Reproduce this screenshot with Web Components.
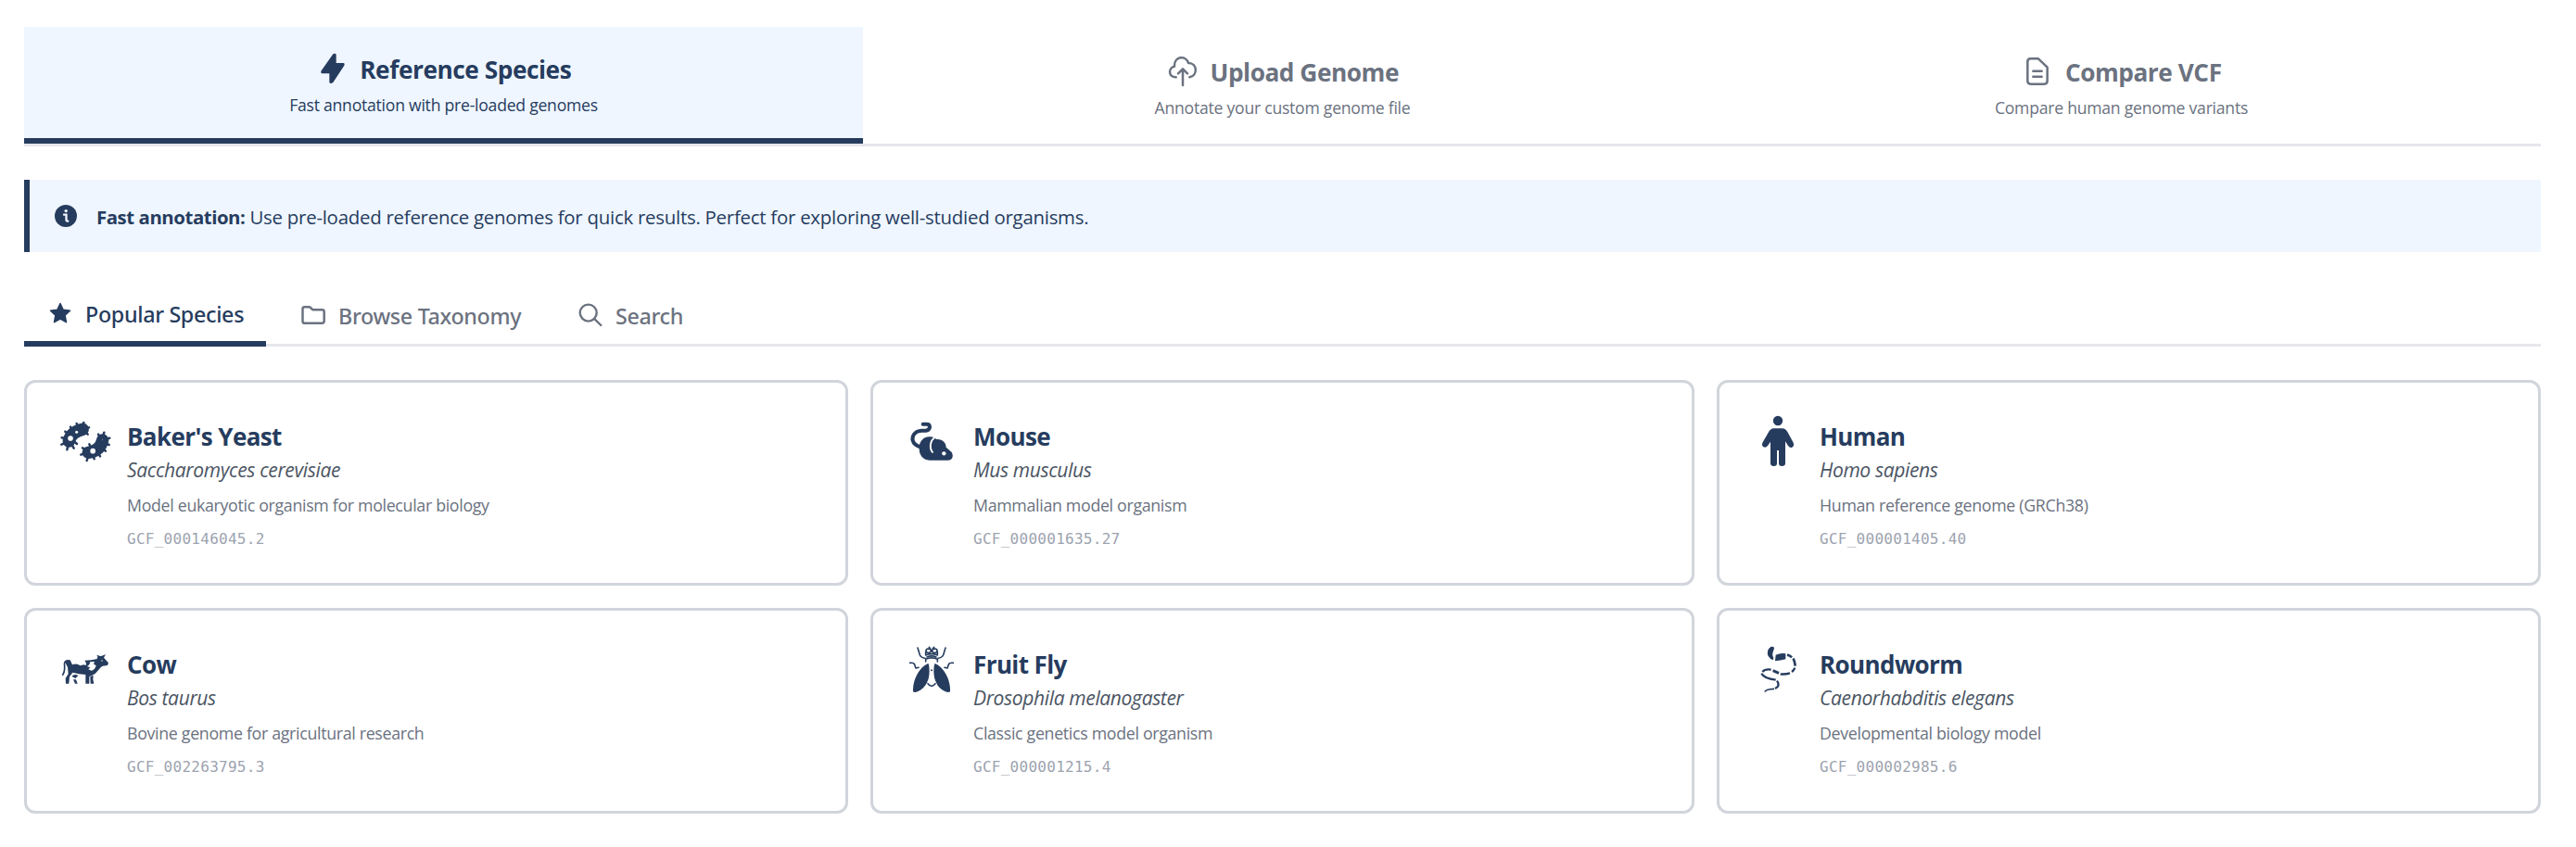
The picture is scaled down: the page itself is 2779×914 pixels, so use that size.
<!DOCTYPE html>
<html lang="en">
<head>
<meta charset="utf-8">
<title>Genome annotation</title>
<style>
body{margin:0;background:#fff;font-family:"Open Sans","Noto Sans",sans-serif;color:#263c5e}
</style>
</head>
<body>
<genome-app></genome-app>
<script>
const ICONS={
bolt:['132 57 90 90','<path d="M178 55Q187 51 188 58V84H211Q217 85 214 92L178 147Q168 154 166 146V118H143Q136 117 140 109Z" fill="currentColor"/>'],
upload:['120 65 90 90','<g fill="none" stroke="currentColor" stroke-width="7.5" stroke-linecap="round" stroke-linejoin="round"><path d="M143 129C118 130 117 98 138 94C136 61 175 56 183 83C213 83 214 124 187 129"/><path d="M165 155V103M150 117L165 102L180 117"/></g>'],
doc:['159 66 90 90','<path d="M182 70H207L236 98V142Q236 152 226 152H182Q172 152 172 142V80Q172 70 182 70ZM190 110.500H218M190 128H218" fill="none" stroke="currentColor" stroke-width="7.500" stroke-linecap="round" stroke-linejoin="round"/>'],
info:['0 0 24 24','<circle cx="12" cy="12" r="12" fill="currentColor"/><circle cx="12.200" cy="6.600" r="1.700" fill="#eff6ff"/><path d="M10 10.700H12.500V16.200Q12.500 18 14.300 17.600" fill="none" stroke="#eff6ff" stroke-width="2.300" stroke-linecap="round"/>'],
star:['0 0 30 30','<path d="M15 4.500L18.200 11.300L25.500 12.200L20.100 17.300L21.500 24.700L15 21.100L8.500 24.700L9.900 17.300L4.500 12.200L11.800 11.300Z" fill="currentColor" stroke="currentColor" stroke-width="1.500" stroke-linejoin="round"/>'],
folder:['0 0 30 30','<path d="M3.500 8.300Q3.500 6.300 5.700 6.300H10.500Q11.300 6.300 12 7L14.300 9.200H24.500Q26.700 9.200 26.700 11.400V21.600Q26.700 23.800 24.500 23.800H5.700Q3.500 23.800 3.500 21.600Z" fill="none" stroke="currentColor" stroke-width="2.500" stroke-linejoin="round"/>'],
search:['0 0 30 30','<g fill="none" stroke="currentColor" stroke-width="2.400" stroke-linecap="round"><circle cx="12.700" cy="12.600" r="9"/><path d="M19.300 19.200L26.300 26"/></g>'],
yeast:['45 27 162 162','<g fill="none" stroke="currentColor" stroke-linecap="round"><path d="M73 108Q80 78 117 70" stroke-width="41"/><path d="M136 145Q174 140 182 105" stroke-width="40"/><path stroke-width="7.500" d="M121 48L115 66M98 51L104 66M78 62L88 76M61 77L76 88M50 97L70 101M49 119L68 112M67 136L73 110M89 131L78 112M99 117L85 105M138 64L122 70M134 86L120 74M187 80L182 100M168 86L178 100M205 98L186 105M203 120L182 112M192 140L174 128M174 157L164 140M155 166L151 148M131 171L138 148M112 152L134 144M117 130L134 140M139 118L148 134"/></g><circle cx="78" cy="99" r="8.500" fill="#fff"/><circle cx="98" cy="79" r="4.500" fill="#fff"/><circle cx="150.500" cy="140" r="8.500" fill="#fff"/><circle cx="182" cy="104" r="1.300" fill="#fff"/>'],
mouse:['144 147 162 162','<path d="M197 173H209Q219 173 219 183Q218 193 206 194H192C170 195 161 212 164 226Q168 241 188 247" fill="none" stroke="currentColor" stroke-width="12" stroke-linecap="round"/><path d="M185 253C183 228 202 212 220 214Q235 215 240 222C260 220 272 233 272 248L290 264Q296 275 291 284Q287 290 278 290H218C199 290 185 275 185 253Z" fill="currentColor"/><path d="M234 217C220 228 217 250 228 264" fill="none" stroke="#fff" stroke-width="5.500" stroke-linecap="round"/><circle cx="265" cy="268" r="6.500" fill="#fff"/>'],
human:['123 147 162 162','<g fill="currentColor"><circle cx="204" cy="162" r="15.500"/><path d="M190 187H218Q229 188 235 198L254 233Q258 243 250 248Q243 251 237 243L228 229V300Q228 309 217 309Q207 309 207 300V258H201V300Q201 309 191 309Q180 309 180 300V230L171 243Q165 251 157 247Q150 242 155 232L174 199Q180 188 190 187Z"/></g>'],
cow:['135 135 162 162','<g fill="currentColor"><path d="M149 191Q157 183 167 187L174 202Q188 196 200 205L210 202Q222 207 218 195L214 188L236 187L254 183L256 176L253 170L264 174L270 173L282 168L276 179L291 196L288 204L272 206Q266 209 256 222Q248 234 238 236L229 240L229 263H217L217 234Q195 232 175 227L165 241L163 263H153L152 246L161 232L159 210Z"/><path d="M172 239Q182 230 193 237L184 246ZM177 250L186 250L191 263H183ZM232 240L242 236L241 250L244 263H233Z"/></g><path d="M158 189Q146 190 149 206Q150 226 142 236" fill="none" stroke="currentColor" stroke-width="5"/><path d="M222 207Q232 202 231 193L246 192L243 200L251 204Q248 218 236 221L226 217L232 211Z" fill="#fff"/><circle cx="270" cy="189" r="2" fill="#fff"/>'],
fly:['144 135 162 162','<g fill="currentColor"><path d="M215 198C190 206 163 246 165 289Q170 293 180 289C207 278 222 248 217 208Z"/><path d="M235 198C260 206 287 246 285 289Q280 293 270 289C243 278 228 248 233 208Z"/><circle cx="225" cy="220" r="3"/></g><g fill="none" stroke="currentColor" stroke-width="4.800" stroke-linecap="round" stroke-linejoin="round"><path d="M180 147L187 170Q190 178 204 181M270 147L263 170Q260 178 246 181M155 196Q169 195 170 202L174 213L183 211M295 196Q281 195 280 202L276 213L267 211"/><ellipse cx="215" cy="157" rx="8" ry="6.500"/><ellipse cx="235" cy="157" rx="8" ry="6.500"/><path d="M217 145L221 150M233 145L229 150M206 160V171Q225 163 244 171V160M206 192V184Q225 175 244 184V192M210 177Q225 170 240 177M213 263Q225 279 237 263"/></g>'],
worm:['123 135 162 162','<g fill="currentColor"><path d="M190 144Q178 140 171 157Q167 178 188 187L190 180Q183 168 191 153Q193 147 190 144Z"/><path d="M197 170Q214 163 229 166V184Q212 188 195 190Z"/></g><g fill="none" stroke="currentColor" stroke-width="7"><path d="M234 170Q243 172 249 178M253 182Q258 188 260 206" stroke-width="8"/><path d="M259 212Q256 220 249 225M243 229Q228 234 212 232"/><path d="M207 229L188 221" stroke-width="9"/><path d="M182 218Q162 215 154 225M151 230Q159 246 197 251M201 254Q213 270 195 279"/><path d="M192 280Q164 281 162 290" stroke-width="5.500"/></g>']
};
const define=(name,render)=>customElements.define(name,class extends HTMLElement{
  connectedCallback(){if(!this.shadowRoot)this.attachShadow({mode:'open'}).innerHTML=render(this)}
});
define('ui-icon',el=>{const [box,art]=ICONS[el.getAttribute('name')];return `<style>:host{display:block;flex:none;width:30px;height:30px}svg{display:block;width:100%;height:100%;overflow:visible}</style><svg viewBox="${box}" aria-hidden="true">${art}</svg>`});
define('mode-tab',el=>`<style>
:host{display:flex;flex-direction:column;align-items:center;box-sizing:border-box;height:126px;padding-top:29px;color:#6b7280}
:host([active]){padding-top:26px;background:#eff6ff;color:#263c5e;border-bottom:6px solid #263c5e}
.t{display:flex;gap:14.5px;align-items:center;padding-left:3px;font-size:26.25px;line-height:40px;font-weight:700;letter-spacing:-.45px;white-space:nowrap}
ui-icon{margin-top:-2px}.s{margin-top:4px;font-size:17.6px;line-height:28px;letter-spacing:-.24px}</style>
<div class="t"><ui-icon name="${el.getAttribute('icon')}"></ui-icon><span><slot></slot></span></div><div class="s"><slot name="sub"></slot></div>`);
define('info-banner',()=>`<style>
:host{display:flex;align-items:center;box-sizing:border-box;height:78px;margin-top:36px;border-left:6px solid #263c5e;background:#eff6ff;padding-left:27px;gap:21px;font-size:20.4px;letter-spacing:-.24px;line-height:32px}
ui-icon{width:24px;height:24px}p{margin:2px 0 0}::slotted(b){font-weight:700!important;letter-spacing:-.45px}</style><ui-icon name="info"></ui-icon><p><slot></slot></p>`);
define('sub-tab',el=>`<style>
:host{display:flex;align-items:center;box-sizing:border-box;gap:12px;height:62px;padding:0 24px;color:#6b7280;font:500 23.3px/36px "Noto Sans",sans-serif;letter-spacing:-.33px;white-space:nowrap}
:host([active]){height:64px;color:#263c5e;border-bottom:6px solid #263c5e}ui-icon{margin-top:-2px}</style><ui-icon name="${el.getAttribute('icon')}"></ui-icon><span><slot></slot></span>`);
define('species-card',el=>`<style>
:host{display:flex;box-sizing:border-box;height:222px;border:3px solid #d1d5db;border-radius:12px;padding:36px;gap:18px;background:#fff}
ui-icon{width:54px;height:54px}h3,p{margin:0;white-space:nowrap}
h3{margin-top:4px;font-size:26px;line-height:36px;font-weight:700;letter-spacing:-.6px;color:#263c5e}
.l{margin-top:3px;font-size:21px;line-height:30px;font-style:italic;letter-spacing:-.35px;color:#4b5563}
.d{margin-top:9px;font-size:17.8px;line-height:28px;letter-spacing:-.32px;color:#6b7280}
.g{margin-top:11px;font:16px/24px "DejaVu Sans Mono",monospace;letter-spacing:.27px;color:#9ca3af}</style>
<ui-icon name="${el.getAttribute('icon')}"></ui-icon><div><h3><slot></slot></h3><p class="l"><slot name="latin"></slot></p><p class="d"><slot name="about"></slot></p><p class="g"><slot name="id"></slot></p></div>`);
const species=[['yeast',"Baker's Yeast",'Saccharomyces cerevisiae','Model eukaryotic organism for molecular biology','GCF_000146045.2'],['mouse','Mouse','Mus musculus','Mammalian model organism','GCF_000001635.27'],['human','Human','Homo sapiens','Human reference genome (GRCh38)','GCF_000001405.40'],['cow','Cow','Bos taurus','Bovine genome for agricultural research','GCF_002263795.3'],['fly','Fruit Fly','Drosophila melanogaster','Classic genetics model organism','GCF_000001215.4'],['worm','Roundworm','Caenorhabditis elegans','Developmental biology model','GCF_000002985.6']];
define('genome-app',()=>`<style>
:host{display:block;box-sizing:border-box;padding:29px 38px 36px 26px}
.modes{display:grid;grid-template-columns:repeat(3,1fr);border-bottom:3px solid #e5e7eb}
.tabs{display:flex;gap:12px;align-items:flex-start;height:64px;margin-top:38px;box-shadow:inset 0 -3px #e5e7eb}
.tabs sub-tab:nth-child(1){width:261px}.tabs sub-tab:nth-child(2){width:287px}
.grid{display:grid;grid-template-columns:repeat(3,1fr);gap:24px;margin-top:36px}</style>
<div class="modes"><mode-tab icon="bolt" active>Reference Species<span slot="sub">Fast annotation with pre-loaded genomes</span></mode-tab><mode-tab icon="upload">Upload Genome<span slot="sub">Annotate your custom genome file</span></mode-tab><mode-tab icon="doc">Compare VCF<span slot="sub">Compare human genome variants</span></mode-tab></div>
<info-banner><b>Fast annotation:</b> Use pre-loaded reference genomes for quick results. Perfect for exploring well-studied organisms.</info-banner>
<div class="tabs"><sub-tab icon="star" active>Popular Species</sub-tab><sub-tab icon="folder">Browse Taxonomy</sub-tab><sub-tab icon="search">Search</sub-tab></div>
<div class="grid">${species.map(([i,n,l,a,g])=>`<species-card icon="${i}">${n}<span slot="latin">${l}</span><span slot="about">${a}</span><span slot="id">${g}</span></species-card>`).join('')}</div>`);
</script>
</body>
</html>
